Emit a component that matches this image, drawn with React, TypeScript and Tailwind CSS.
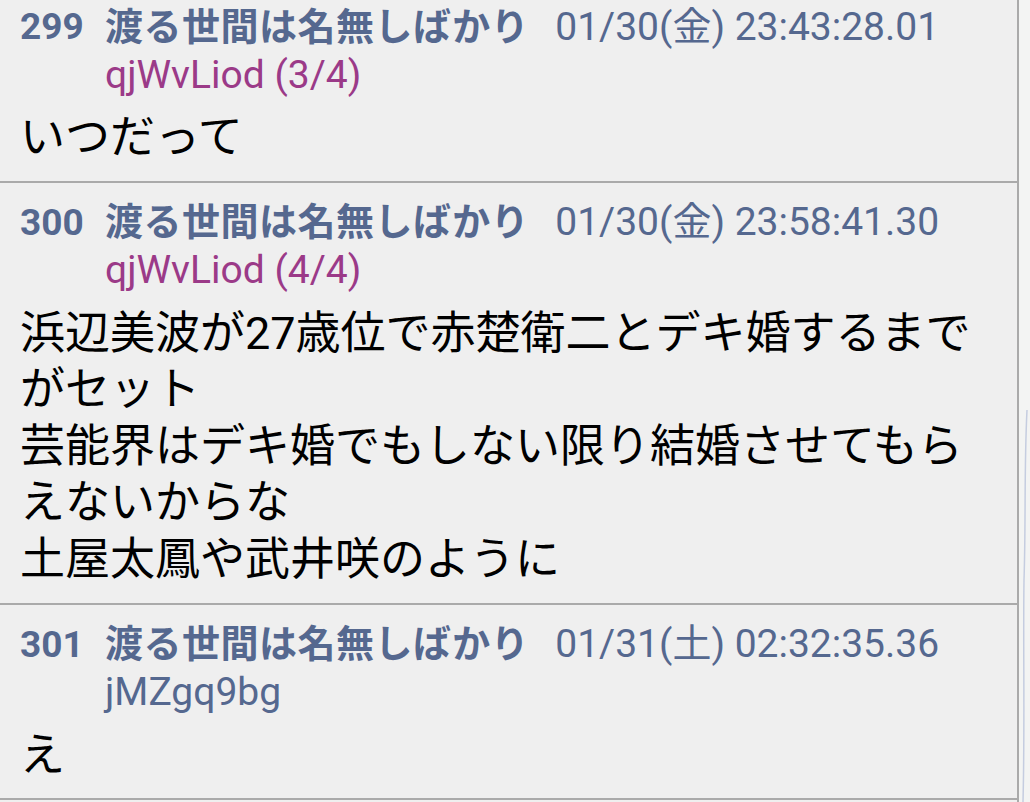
import React from 'react'

type Post = {
    no: number
    date: string
    id: string
    idColor: string
    body: string[]
}

const posts: Post[] = [
    {
        no: 299,
        date: '01/30(金) 23:43:28.01',
        id: 'qjWvLiod (3/4)',
        idColor: 'text-[#9b3a88]',
        body: ['いつだって'],
    },
    {
        no: 300,
        date: '01/30(金) 23:58:41.30',
        id: 'qjWvLiod (4/4)',
        idColor: 'text-[#9b3a88]',
        body: [
            '浜辺美波が27歳位で赤楚衛二とデキ婚するまでがセット',
            '芸能界はデキ婚でもしない限り結婚させてもらえないからな',
            '土屋太鳳や武井咲のように',
        ],
    },
    {
        no: 301,
        date: '01/31(土) 02:32:35.36',
        id: 'jMZgq9bg',
        idColor: 'text-[#55688f]',
        body: ['え'],
    },
]

const font = { fontFamily: 'Roboto, "Noto Sans CJK JP", sans-serif' }

function PostItem({ post }: { post: Post }) {
    return (
        <div className="border-b-2 border-[#aaaaaa] pl-[20px] pr-[30px] pt-[16px] pb-[14px]">
            <div className="flex items-center h-[48px] text-[37px] text-[#55688f] whitespace-nowrap">
                <span className="font-bold w-[85px]">{post.no}</span>
                <span className="font-bold text-[38px] tracking-[0.5px]">渡る世間は名無しばかり</span>
                <span className="ml-[26px] text-[39px]">{post.date}</span>
            </div>
            <div className={`pl-[85px] h-[48px] flex items-center text-[39px] ${post.idColor}`}>
                {post.id}
            </div>
            <div className="mt-[11px] text-[45px] leading-[56.6px] text-black">
                {post.body.map((line, i) => (
                    <div key={i}>{line}</div>
                ))}
            </div>
        </div>
    )
}

export default function App() {
    return (
        <div className="w-[1030px] h-[802px] overflow-hidden flex bg-[#f3f4f3]" style={font}>
            <div className="w-[1019px] bg-[#efefef] border-r-2 border-[#aaaaaa] overflow-hidden">
                <div className="mt-[-13px]">
                    {posts.map((p) => (
                        <PostItem key={p.no} post={p} />
                    ))}
                </div>
            </div>
            <div className="flex-1 relative">
                <svg className="absolute left-0 top-0" width="11" height="802" viewBox="0 0 11 802">
                    <path d="M8 410 C5 470 7 520 5 580 C4 650 6 720 4 802" stroke="#c5cde0" strokeWidth="1.5" fill="none" />
                </svg>
            </div>
        </div>
    )
}
